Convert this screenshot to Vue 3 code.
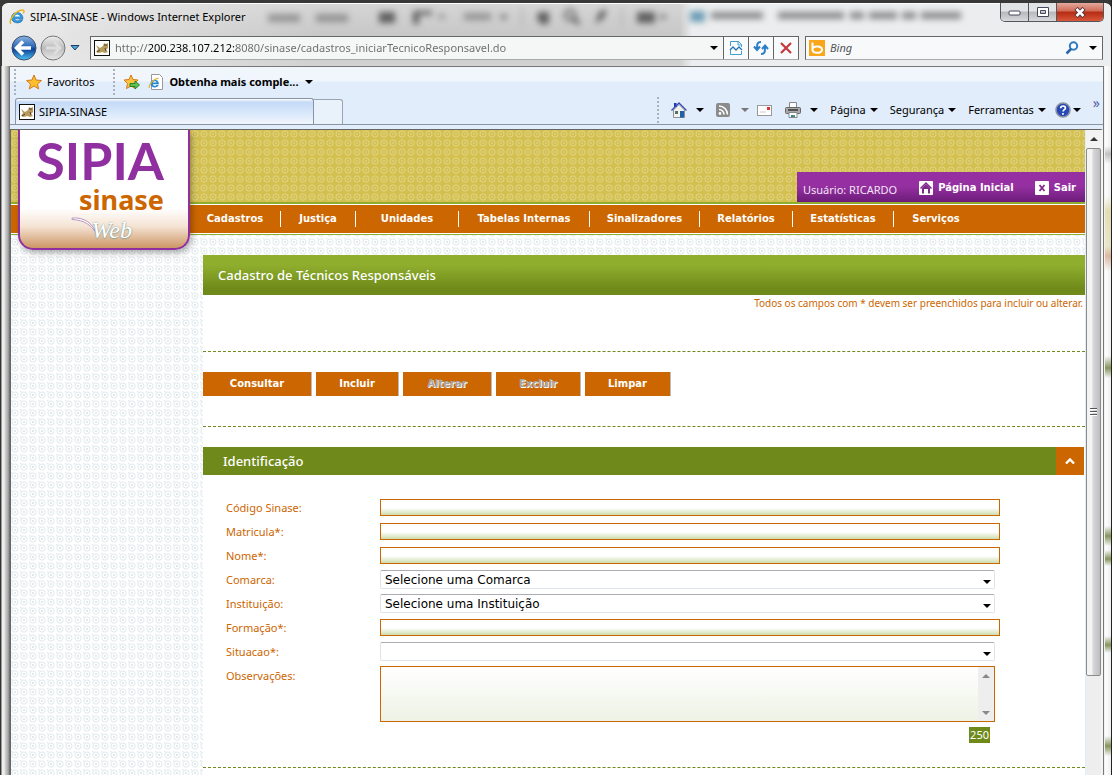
<script setup>
import { ref } from 'vue'

const menu = ['Cadastros', 'Justiça', 'Unidades', 'Tabelas Internas', 'Sinalizadores', 'Relatórios', 'Estatísticas', 'Serviços']
const actions = [
  { label: 'Consultar' },
  { label: 'Incluir' },
  { label: 'Alterar', disabled: true },
  { label: 'Excluir', disabled: true },
  { label: 'Limpar' }
]
const fields = [
  { id: 'codigo', label: 'Código Sinase:', type: 'text' },
  { id: 'matricula', label: 'Matricula*:', type: 'text' },
  { id: 'nome', label: 'Nome*:', type: 'text' },
  { id: 'comarca', label: 'Comarca:', type: 'select', option: 'Selecione uma Comarca' },
  { id: 'instituicao', label: 'Instituição:', type: 'select', option: 'Selecione uma Instituição' },
  { id: 'formacao', label: 'Formação*:', type: 'text' },
  { id: 'situacao', label: 'Situacao*:', type: 'select', option: '' },
  { id: 'observacoes', label: 'Observações:', type: 'area' }
]
const url = ref('http://200.238.107.212:8080/sinase/cadastros_iniciarTecnicoResponsavel.do')
</script>

<template>
  <div class="window">
    <div class="glass" aria-hidden="true">
      <div class="glass-light"></div>
      <svg class="ghost" width="1112" height="66" viewBox="0 0 1112 66">
        <g fill="#3c3c3c">
          <rect x="268" y="14" width="32" height="8" opacity=".4" />
          <rect x="316" y="14" width="32" height="8" opacity=".4" />
          <rect x="379" y="12" width="16" height="11" opacity=".75" />
          <path d="M413 11h19v4h-13v9h-6zM438 15h7l-3 4z" opacity=".75" />
          <rect x="464" y="13" width="27" height="7" opacity=".4" />
          <path d="M499 15h9l-4 5zM538 12h11v11l-6 2-6-5zM599 12l8-3-3 9-9 6zM637 12h18v11h-18zM659 15h8l-4 5z" opacity=".75" />
          <circle cx="570" cy="15" r="5" fill="none" stroke="#3c3c3c" stroke-width="2" />
          <path d="M574 19l5 5" stroke="#3c3c3c" stroke-width="3" />
          <path d="M522 8v18M622 8v18" stroke="#999" />
        </g>
        <rect x="690" y="11" width="15" height="11" fill="#6e9db5" />
        <g fill="#555" opacity=".65">
          <rect x="711" y="12" width="52" height="7" /><rect x="778" y="12" width="66" height="7" />
          <rect x="850" y="12" width="14" height="7" /><rect x="869" y="12" width="28" height="7" />
          <rect x="902" y="12" width="14" height="7" /><rect x="921" y="12" width="40" height="7" />
        </g>
      </svg>
    </div>

    <header class="titlebar">
      <svg class="i16" viewBox="0 0 16 16"><path d="M14 9.800H5.600c.4 2.300 3.800 2.800 4.900.9h3.200C12 15.600 2.500 14.800 2.500 8.800c0-7 11.500-7.500 11.500 1z" fill="#2f9ae0" stroke="#1465ae" stroke-width=".6" /><path d="M5.700 7.500h5.200c-.3-2.300-4.800-2.400-5.200 0z" fill="#fff" /><path d="M1.800 14.800C-1 11 7 1.500 13 1c2.500-.2 2.300 1.700 1.200 3.300" fill="none" stroke="#e9b425" stroke-width="1.500" /></svg>
      <h1>SIPIA-SINASE - Windows Internet Explorer</h1>
      <div class="controls">
        <button aria-label="Minimizar"><svg width="14" height="10" viewBox="0 0 14 10"><rect x="1" y="4" width="11" height="4" rx="1" fill="#fff" stroke="#45475a" /></svg></button>
        <button aria-label="Maximizar"><svg width="14" height="10" viewBox="0 0 14 10"><path d="M1.500 .5h11v9h-11zM4.500 3.500h5v3h-5z" fill="#fff" stroke="#45475a" fill-rule="evenodd" /></svg></button>
        <button class="close" aria-label="Fechar"><svg width="14" height="11" viewBox="0 0 14 11"><path d="M3 1.500l8 8M11 1.500l-8 8" stroke="#52343a" stroke-width="4.500" /><path d="M3.500 2l7 7M10.500 2l-7 7" stroke="#fff" stroke-width="2.500" /></svg></button>
      </div>
    </header>

    <div class="navbar">
      <button class="bare round" aria-label="Voltar"><svg width="26" height="26" viewBox="0 0 26 26"><defs><linearGradient id="bk" x2="0" y2="1"><stop offset="0" stop-color="#8fb6e2" /><stop offset=".45" stop-color="#2a66b8" /><stop offset=".55" stop-color="#0b3f93" /><stop offset="1" stop-color="#4cc3f5" /></linearGradient></defs><circle cx="13" cy="13" r="12" fill="url(#bk)" stroke="#3b4d6c" /><path d="M12 6.500L5.500 13l6.500 6.500M6 13h14" fill="none" stroke="#fff" stroke-width="3.500" /></svg></button>
      <button class="bare round" aria-label="Avançar"><svg width="26" height="26" viewBox="0 0 26 26"><defs><linearGradient id="fw" x2="0" y2="1"><stop offset="0" stop-color="#eee" /><stop offset=".5" stop-color="#bcbcbc" /><stop offset="1" stop-color="#e9e9e9" /></linearGradient></defs><circle cx="13" cy="13" r="12" fill="url(#fw)" stroke="#777" /><path d="M14 7l6 6-6 6M19 13H6" fill="none" stroke="#ddd" stroke-width="3" /></svg></button>
      <button class="bare hist" aria-label="Páginas recentes"><svg width="10" height="6" viewBox="0 0 10 6"><path d="M1 .5h8L5 5z" fill="#4ba6dc" stroke="#1d3c66" /></svg></button>
      <div class="address">
        <svg class="i16" viewBox="0 0 16 16"><rect x=".5" y=".5" width="15" height="15" fill="#fff" stroke="#111" /><path d="M2 5l4 3 3-2 1-3 2 1 2-1v5l-2 2 2 2-3 1-3-1-3 1-3-1 2-3z" fill="#b79a5c" /><path d="M3 12l3-2M10 5h3M11 8l1 3" stroke="#4d4331" fill="none" /></svg>
        <input v-model="url" class="url" type="text" aria-label="Endereço">
        <i class="tri"></i>
        <button aria-label="Modo de compatibilidade"><svg width="14" height="16" viewBox="0 0 14 16"><path d="M1.500 6V1.500h8l3 3V7M1.500 10v4.500h11V11" fill="#fff" stroke="#3f9fd0" /><path d="M9 1v4h4" fill="none" stroke="#3f9fd0" /><path d="M1 10l3-3 3 3 3-3 3 3" fill="none" stroke="#2876b5" stroke-width="1.300" /></svg></button>
        <button aria-label="Atualizar"><svg width="16" height="14" viewBox="0 0 16 14"><path d="M8 1C4 1 4 3 4 8M1 5.500L4 9l3-3.500M8 13c4 0 4-2 4-7M9 8l3-3.500L15 8" fill="none" stroke="#2b7dc8" stroke-width="2" /></svg></button>
        <button aria-label="Parar"><svg width="12" height="12" viewBox="0 0 12 12"><path d="M1 1l10 10M11 1L1 11" stroke="#c4383c" stroke-width="2.200" /></svg></button>
      </div>
      <div class="search">
        <svg class="i16" viewBox="0 0 16 16"><rect width="16" height="16" fill="#faa61a" /><path d="M3.500 2.500v7M3.500 9c.5-3.500 9.500-3.200 9.500.7 0 4.300-9.500 4-9.500 0z" fill="none" stroke="#fff" stroke-width="2" /></svg>
        <input type="text" aria-label="Pesquisar no Bing" placeholder="Bing">
        <svg width="14" height="14" viewBox="0 0 14 14"><circle cx="8.500" cy="5" r="3.700" fill="#fff" stroke="#2f7ac0" stroke-width="2" /><path d="M6 8L1.500 12.500" stroke="#2766a8" stroke-width="2.500" /></svg>
        <i class="tri"></i>
      </div>
    </div>

    <div class="client">
      <div class="favbar">
        <i class="grip"></i>
        <button class="bare fav"><svg class="i16" viewBox="0 0 16 16"><path d="M8 1l2 5 5.500.5-4 3.500 1.200 5L8 12l-4.700 3 1.200-5-4-3.500L6 6z" fill="#fdbf2d" stroke="#d4791a" /></svg>Favoritos</button>
        <i class="grip"></i>
        <button class="bare add" aria-label="Adicionar à barra de favoritos"><svg class="i16" viewBox="0 0 16 16"><path d="M7 1l2 4.500 5 .5-3.500 3.500 1 5L7 12l-4.500 2.500 1-5L0 6l5-.5z" fill="#fdc33c" stroke="#d4791a" /><path d="M6 9.500h5V7l4.500 4-4.500 4v-2.500H6z" fill="#62c14e" stroke="#258326" /></svg></button>
        <button class="bare addon"><svg class="i16" viewBox="0 0 16 16"><path d="M3.500.5h8l3 3v12h-11z" fill="#fff" stroke="#999" /><path d="M11 10.300H4.800c.4 2 3 2.200 3.700.6h2.200C9.500 14.700 2.500 14 2.500 9.700c0-5.200 8.500-5.200 8.500.6z" fill="#2488d4" /><path d="M4.900 8.500h3.700c-.4-1.600-3.300-1.600-3.700 0z" fill="#fff" /><path d="M1.500 13.800C0 11 6 4.500 10.500 4.200" fill="none" stroke="#e2ad22" stroke-width="1.200" /></svg><b>Obtenha mais comple...</b><i class="tri"></i></button>
      </div>
      <div class="tabrow">
        <div class="tab"><svg class="i16" viewBox="0 0 16 16"><rect x=".5" y=".5" width="15" height="15" fill="#fff" stroke="#111" /><path d="M2 5l4 3 3-2 1-3 2 1 2-1v5l-2 2 2 2-3 1-3-1-3 1-3-1 2-3z" fill="#b79a5c" /><path d="M3 12l3-2M10 5h3M11 8l1 3" stroke="#4d4331" fill="none" /></svg>SIPIA-SINASE</div>
        <button class="newtab" aria-label="Nova guia"></button>
        <div class="commands">
          <i class="grip"></i>
          <button class="bare home" aria-label="Página inicial"><svg class="i16" viewBox="0 0 16 16"><path d="M2.500 8v7.500h11V8L8 2.500z" fill="#f3f3ee" stroke="#8a8f99" /><path d="M3 1h2.500v4H3z" fill="#1d35c5" /><path d="M.5 8.500L8 1l7.500 7.500" fill="none" stroke="#3a4bb3" stroke-width="1.300" /><path d="M9 9h4v6.500H9z" fill="#2161a8" /><path d="M4 9h3v3H4z" fill="#5b6f65" /></svg><i class="tri"></i></button>
          <button class="bare feed" aria-label="Feeds"><svg width="14" height="14" viewBox="0 0 14 14"><rect width="14" height="14" rx="2" fill="#8b8b8b" /><circle cx="4" cy="10.500" r="1.400" fill="#fff" /><path d="M3 6.500a5 5 0 015 5M3 3a8.500 8.500 0 018.500 8.500" fill="none" stroke="#fff" stroke-width="1.600" /></svg><i class="tri grey"></i></button>
          <button class="bare mail" aria-label="Ler email"><svg width="15" height="11" viewBox="0 0 15 11"><rect x=".5" y=".5" width="14" height="10" fill="#fff" stroke="#999" /><rect x="10" y="2" width="3" height="3" fill="#d33" /><path d="M3 7h6" stroke="#ccc" /></svg></button>
          <button class="bare print" aria-label="Imprimir"><svg class="i16" viewBox="0 0 16 16"><path d="M4.500.5h7V6h-7z" fill="#fff" stroke="#888" /><rect x=".5" y="5.500" width="15" height="6" rx="1" fill="#aaa" stroke="#666" /><path d="M3 8h10" stroke="#333" stroke-width="1.500" /><path d="M4 10.500h8v5H4z" fill="#fff" stroke="#888" /><path d="M6 13h2v2H6z" fill="#2d7fc1" /><path d="M8 13h2v2H8z" fill="#4f9b46" /></svg><i class="tri"></i></button>
          <button class="bare word">Página<i class="tri"></i></button>
          <button class="bare word">Segurança<i class="tri"></i></button>
          <button class="bare word">Ferramentas<i class="tri"></i></button>
          <button class="bare help" aria-label="Ajuda"><svg class="i16" viewBox="0 0 16 16"><circle cx="8" cy="8" r="7" fill="#2748b5" stroke="#8d93a3" stroke-width="1.600" /><path d="M5.700 6.200c0-3 4.800-2.800 4.700-.2 0 1.600-2.300 1.700-2.300 3.500M8 11v1.800" fill="none" stroke="#fff" stroke-width="1.700" /></svg><i class="tri"></i></button>
          <span class="more">»</span>
        </div>
      </div>

      <div class="viewport">
        <main class="page">
          <div class="masthead">
            <div class="userbar">
              <span class="user">Usuário: RICARDO</span>
              <a href="#" class="ulink"><svg width="14" height="14" viewBox="0 0 14 14"><rect width="14" height="14" rx="1" fill="#fff" /><path d="M1.500 7.500L7 2l5.500 5.500" fill="none" stroke="#80298c" stroke-width="1.500" /><path d="M3 7L7 3l4 4v5.500H9V8H5v4.500H3z" fill="#80298c" /></svg>Página Inicial</a>
              <a href="#" class="ulink exit"><svg width="14" height="14" viewBox="0 0 14 14"><rect width="14" height="14" rx="1" fill="#fff" /><path d="M4.500 4l5 6M9.500 4l-5 6" stroke="#80298c" stroke-width="1.800" /></svg>Sair</a>
            </div>
          </div>
          <nav class="menu"><a v-for="m in menu" :key="m" href="#">{{ m }}</a></nav>
          <div class="logo">
            <div class="sipia">SIPIA</div>
            <div class="sinase">sinase</div>
            <div class="web"><svg width="34" height="24" viewBox="0 0 34 24"><path d="M1 1c12-1 21 5 25 17C21 8 13 3 1 2.500z" fill="#fff" stroke="#a882b4" stroke-width=".8" /></svg><i>Web</i></div>
          </div>

          <div class="content">
            <h2>Cadastro de Técnicos Responsáveis</h2>
            <p class="note">Todos os campos com * devem ser preenchidos para incluir ou alterar.</p>
            <div class="actions">
              <button v-for="a in actions" :key="a.label" type="button" :disabled="a.disabled">{{ a.label }}</button>
            </div>
            <div class="section">
              <h3>Identificação</h3>
              <button type="button" aria-label="Recolher"><svg width="12" height="8" viewBox="0 0 12 8"><path d="M2 6.500l4-4 4 4" fill="none" stroke="#fff" stroke-width="2.400" /></svg></button>
            </div>
            <form class="form" @submit.prevent>
              <div v-for="f in fields" :key="f.id" class="row">
                <label :for="f.id">{{ f.label }}</label>
                <input v-if="f.type === 'text'" :id="f.id" type="text">
                <div v-else-if="f.type === 'select'" class="pick">
                  <select :id="f.id"><option>{{ f.option }}</option></select>
                  <i class="tri"></i>
                </div>
                <div v-else class="areawrap">
                  <textarea :id="f.id"></textarea>
                  <div class="ascroll" aria-hidden="true"><i class="up"></i><i class="down"></i></div>
                </div>
              </div>
              <div class="count"><output>250</output></div>
            </form>
          </div>
        </main>
        <div class="scroll" aria-hidden="true">
          <div class="cap"><i></i></div>
          <div class="thumb"><i></i></div>
          <div class="track"></div>
        </div>
      </div>
    </div>
    <div class="edge" aria-hidden="true"></div>
  </div>
</template>

<style>
html, body { margin: 0; height: 100%; overflow: hidden; background: #2b2b2b; }
</style>

<style scoped>
* { box-sizing: border-box; }
.window {
  position: relative;
  height: 100vh;
  overflow: hidden;
  display: flex;
  flex-direction: column;
  padding: 3px 7px 0 9px;
  border-right: 1px solid #222;
  font: 11px/16px "Noto Sans", sans-serif;
  color: #000;
  background: linear-gradient(90deg, #333 0 1px, #999 1px 2px, #eee 2px 4px, #c4c4c4 6px, #aaa 8px, #888 9px, #f0f1ee 10px);
}
.glass { position: absolute; inset: 0 0 auto 0; height: 66px; background: #383838; overflow: hidden; z-index: 0; }
.glass-light {
  position: absolute; inset: 3px 0 0 2px; border-radius: 6px 6px 0 0; border-top: 1px solid #fff;
  background:
    linear-gradient(90deg, rgba(240,240,240,.9), rgba(240,240,240,0) 320px),
    linear-gradient(90deg, transparent 678px, #ebedee 690px),
    linear-gradient(#d5d5d5, #c6c6c6 55%, #d2d2d2);
}
.ghost { position: absolute; left: 0; top: 0; filter: blur(3px); }
.titlebar, .navbar, .client { position: relative; z-index: 1; }
.i16 { width: 16px; height: 16px; flex: none; }
svg { display: block; flex: none; }
button { font: inherit; color: inherit; cursor: pointer; }
.bare { border: 0; background: none; padding: 0; display: flex; align-items: center; }
.tri { display: inline-block; flex: none; width: 0; height: 0; border: 4px solid transparent; border-top-color: #000; border-bottom: 0; }
.tri.grey { border-top-color: #777; }

.titlebar { display: flex; align-items: flex-start; height: 33px; }
.titlebar .i16 { margin-top: 6px; }
.titlebar h1 { margin: 6px 0 0 5px; font-size: 11px; line-height: 16px; font-weight: 400; flex: 1; }
.controls { display: flex; height: 19px; border: 1px solid #55565c; border-top: 0; border-radius: 0 0 5px 5px; overflow: hidden; }
.controls button { width: 28px; border: 0; border-right: 1px solid #55565c; padding: 0; display: grid; place-items: center; background: linear-gradient(#e2e3e5 45%, #b6b8bc 50%, #d8d9dc); }
.controls .close { width: 46px; border-right: 0; background: linear-gradient(#e3a99c, #d06a55 45%, #b52a12 50%, #d9573b); }

.navbar { display: flex; align-items: center; height: 24px; margin-bottom: 6px; padding-left: 2px; }
.round { margin-right: 3px; }
.hist { margin: 0 10px 0 1px; }
.address, .search { display: flex; align-items: center; height: 24px; border: 1px solid #666; border-bottom-color: #aaa; background: #f5f6f6; }
.address { flex: 1; min-width: 0; padding-left: 3px; }
.url {
  flex: 1; min-width: 0; height: 20px; margin-left: 5px; border: 0; padding: 0; font: 11px/20px "Noto Sans", sans-serif;
  color: transparent; caret-color: #000;
  background: linear-gradient(90deg, #6b6b6b 33px, #000 33px 121px, #6b6b6b 121px);
  background-clip: text;
}
.address .tri { margin-right: 5px; }
.address button { width: 25px; height: 22px; padding: 0; border: 0; border-left: 1px solid #666; background: #f9fafb; display: grid; place-items: center; }
.search { width: 298px; margin: 0 1px 0 6px; padding: 0 5px 0 3px; background: #f7f9fb; }
.search input { flex: 1; min-width: 0; border: 0; background: none; font: italic 11px/18px "Noto Sans", sans-serif; padding: 0 0 0 5px; }
.search input::placeholder { color: #555; opacity: 1; }
.search .tri { margin-left: 10px; }

.client { flex: 1; min-height: 0; display: flex; flex-direction: column; border: 1px solid #777; border-width: 1px 1px 0; background: linear-gradient(#f1f5fc 0 14px, #e1edfa 15px); }
.favbar { display: flex; align-items: center; height: 30px; padding-left: 4px; }
.grip { flex: none; width: 2px; height: 26px; background: repeating-linear-gradient(#aab3bd 0 2px, transparent 2px 4px); }
.fav { gap: 5px; margin: 0 19px 0 10px; }
.add { margin: 0 8px 0 9px; }
.addon { gap: 5px; }
.addon .tri { margin-left: 2px; }
.tabrow { display: flex; align-items: flex-end; height: 28px; border-bottom: 1px solid #8b94a5; }
.tab { width: 299px; height: 26px; margin-left: 5px; padding-left: 3px; display: flex; align-items: center; gap: 4px; border: 1px solid #8b94a5; border-bottom: 0; border-radius: 3px 3px 0 0; background: linear-gradient(#fff, #c4daf7 3px, #dbe9fb 15px, #f0f5fd); }
.newtab { width: 29px; height: 25px; padding: 0; border: 1px solid #9aa3b2; border-bottom: 0; border-left: 0; border-radius: 0 3px 0 0; background: #e9f1fb; }
.commands { flex: 1; display: flex; align-items: center; justify-content: flex-end; height: 28px; padding-right: 3px; }
.home { margin-left: 12px; gap: 9px; }
.feed { margin-left: 12px; gap: 11px; }
.mail { margin-left: 8px; }
.print { margin-left: 13px; gap: 9px; }
.word { margin-left: 12px; gap: 4px; }
.help { margin-left: 9px; gap: 2px; }
.more { margin: 0 0 14px 12px; color: #555fa5; font-size: 14px; line-height: 14px; }

.viewport { flex: 1; min-height: 0; display: flex; margin-top: 4px; border-top: 1px solid #666; border-left: 1px solid #666; border-right: 2px solid #f4f4f4; }
.page {
  position: relative; flex: 1; min-width: 0; display: flex; flex-direction: column; overflow: hidden;
  background-color: #fff;
  background-image: radial-gradient(circle at 4px 4px, #e0e9ec 1px, #fff 1px 2px, #e0e9ec 3px, transparent 4px), radial-gradient(circle at 0 0, #e0e9ec 1px, transparent 2px);
  background-size: 9px 9px;
}
.masthead {
  height: 72px; flex: none; display: flex; justify-content: flex-end; align-items: flex-end;
  background-color: #d3c04e;
  background-image: radial-gradient(circle at 4px 4px, #dccd72 1px, #d3c04e 1px 2px, #e0d387 3px, transparent 4px);
  background-size: 9px 9px;
}
.userbar { display: flex; align-items: center; width: 288px; height: 30px; padding: 2px 9px 0 6px; color: #fff; background: linear-gradient(#9630a2 0 14px, #6f1d7c 29px); }
.user { flex: 1; font-size: 11px; padding-top: 4px; white-space: nowrap; color: #f3e3f5; }
.ulink { display: flex; align-items: center; gap: 5px; color: #fff; text-decoration: none; font: bold 10px/14px "DejaVu Sans", sans-serif; white-space: nowrap; }
.exit { margin-left: 21px; }
.menu {
  flex: none; display: grid; grid-template-columns: 91px 75px 103px 131px 110px 93px 101px 84px; align-items: center;
  height: 33px; padding-left: 179px; background: #c60;
  border-top: 2px solid #8fae2d; border-bottom: 1px solid #8fae2d; box-shadow: inset 0 1px #fff, inset 0 -1px #fff;
}
.menu a { color: #fff; text-decoration: none; text-align: center; font: bold 10px/16px "DejaVu Sans", sans-serif; border-right: 1px solid #fff; white-space: nowrap; }
.menu a:last-child { border: 0; }
.logo {
  position: absolute; left: 7px; top: 0; width: 172px; height: 120px; padding-right: 24px; text-align: right;
  border: 2px solid #9030a0; border-top: 0; border-radius: 0 0 15px 15px;
  background: linear-gradient(#fff 78px, #f5e4d5 96px, #cb9360 119px);
  box-shadow: 2px 3px 6px rgba(0,0,0,.3);
}
.sipia { height: 56px; padding-top: 2px; font: bold 52px/56px Lato, "Liberation Sans", sans-serif; color: #9030a0; }
.sinase { height: 28px; font: bold 27px/28px "Noto Sans", sans-serif; color: #c60; }
.web { position: relative; display: flex; justify-content: flex-end; height: 26px; margin-top: 3px; padding-right: 32px; font: 24px/26px "Liberation Serif", serif; color: #fff; text-shadow: 0 0 2px #7fa3a6, 0 1px 1px #9aa58a; }
.web svg { margin-right: -13px; }

.content { flex: 1; margin: 20px 0 0 192px; background: #fff; }
.content h2 { margin: 0; height: 40px; padding-left: 15px; color: #fff; font: 500 13px/40px "Noto Sans", sans-serif; background: linear-gradient(#8fae2d 0 10px, #6f8a1a 34px); }
.note { margin: 0; height: 57px; padding-right: 2px; text-align: right; color: #c60; font-size: 10px; line-height: 16px; border-bottom: 1px dashed #6f8a1a; }
.actions { display: grid; grid-template-columns: 109px 83px 89px 85px 86px; gap: 4px; height: 75px; padding-top: 20px; border-bottom: 1px dashed #6f8a1a; }
.actions button { height: 24px; padding: 0; border: 0; border-right: 1px solid #bbb; background: #c60; color: #fff; font: bold 10px/24px "DejaVu Sans", sans-serif; }
.actions button:disabled { color: #a7a3a3; text-shadow: 1px 1px #fff; }
.section { display: flex; height: 28px; margin: 20px 1px 0 0; background: #6f8a1a; }
.section h3 { flex: 1; margin: 0; padding-left: 20px; color: #fff; font: 500 13px/28px "Noto Sans", sans-serif; }
.section button { width: 28px; padding: 0; border: 0; background: #c60; display: grid; place-items: center; }
.form { padding: 21px 85px 0 23px; border-bottom: 1px dashed #6f8a1a; height: 293px; }
.row { display: grid; grid-template-columns: 154px 1fr; min-height: 24px; align-items: start; }
.row label { color: #c60; font-size: 11px; line-height: 24px; }
.row > input { width: 100%; height: 17px; margin-top: 3px; border: 1px solid #c60; padding: 0 3px; font: 12px/15px "DejaVu Sans", sans-serif; background: linear-gradient(#fff 8px, #cddcab); }
.pick { position: relative; margin: 2px 5px 0 0; height: 19px; }
.pick select { display: block; width: 100%; height: 19px; padding: 2px 20px 0 4px; border: 1px solid #dfe3ea; border-top-color: #abadb3; border-radius: 2px; appearance: none; background: #fff; color: #000; font: 12px/15px "DejaVu Sans", sans-serif; }
.pick .tri { position: absolute; right: 4px; top: 10px; pointer-events: none; }
.areawrap { position: relative; margin: 2px 5px 0 0; }
.areawrap textarea { display: block; width: 100%; height: 56px; resize: none; border: 1px solid #c60; padding: 2px 18px 2px 3px; font: 12px/16px "DejaVu Sans", sans-serif; background: linear-gradient(#fff, #eef2e4); }
.ascroll { position: absolute; inset: 1px 1px 1px auto; width: 16px; background: #eee; display: flex; flex-direction: column; justify-content: space-between; align-items: center; padding: 7px 0 6px; }
.up, .cap i { border: 4px solid transparent; border-bottom-color: #888; border-top: 0; }
.down { border: 4px solid transparent; border-top-color: #888; border-bottom: 0; }
.count { margin: 5px 10px 0 0; display: flex; justify-content: flex-end; }
.count output { background: #6f8a1a; color: #fff; font-size: 11px; line-height: 16px; padding: 0 1px; }

.scroll { flex: none; width: 15px; margin-left: 1px; display: flex; flex-direction: column; background: #eee; }
.cap { height: 18px; display: grid; place-items: center; background: #f3f3f3; }
.cap i { border-bottom-color: #333; }
.thumb { flex: 528; border: 1px solid #8b8b8b; border-radius: 2px; background: linear-gradient(90deg, #f4f4f4 35%, #d6d6d9 50%, #bebec2); display: grid; place-items: center; }
.thumb i { width: 7px; height: 9px; background: repeating-linear-gradient(#555 0 1px, #fff 1px 2px, transparent 2px 3px); }
.track { flex: 99; }
.edge {
  position: absolute; right: 0; top: 66px; bottom: 0; width: 6px;
  background:
    linear-gradient(transparent 80px, rgba(110,110,110,.4) 88px, transparent 98px, transparent 130px, rgba(220,210,150,.7) 145px, rgba(220,210,150,.5) 180px, rgba(196,120,70,.5) 190px, transparent 205px),
    linear-gradient(transparent 290px, #84955a 302px, transparent 312px 460px, #84955a 470px, transparent 480px 484px, #84955a 493px, transparent 500px, transparent 570px, #84955a 579px, transparent 587px, transparent 670px, #84955a 680px, transparent 690px),
    linear-gradient(90deg, #fff, #eceef0);
}
</style>
